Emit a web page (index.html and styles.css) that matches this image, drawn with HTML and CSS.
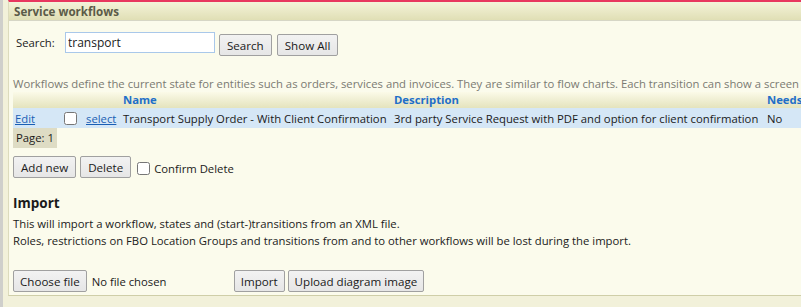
FILE: index.html
```html
<!DOCTYPE html>
<html lang="en">
<head>
    <meta charset="UTF-8">
    <title>Service workflows</title>
    <link rel="stylesheet" href="styles.css">
</head>
<body>
    <div class="page">
        <div class="panel">
            <div class="panel-header">Service workflows</div>
            <div class="panel-body">
                <div class="search-row">
                    <label for="search">Search:</label>
                    <input type="text" id="search" class="search-input" value="transport">
                    <button class="btn">Search</button>
                    <button class="btn">Show All</button>
                </div>

                <p class="intro">Workflows define the current state for entities such as orders, services and invoices. They are similar to flow charts. Each transition can show a screen to the user and run actions.</p>

                <table class="grid">
                    <thead>
                        <tr>
                            <th class="col-edit"></th>
                            <th class="col-check"></th>
                            <th class="col-select"></th>
                            <th class="col-name">Name</th>
                            <th class="col-desc">Description</th>
                            <th class="col-needs">Needs confirmation</th>
                        </tr>
                    </thead>
                    <tbody>
                        <tr class="selected">
                            <td><a href="#">Edit</a></td>
                            <td><input type="checkbox" class="check"></td>
                            <td><a href="#">select</a></td>
                            <td>Transport Supply Order - With Client Confirmation</td>
                            <td>3rd party Service Request with PDF and option for client confirmation</td>
                            <td>No</td>
                        </tr>
                    </tbody>
                </table>
                <div class="pager">Page: 1</div>

                <div class="actions">
                    <button class="btn">Add new</button>
                    <button class="btn">Delete</button>
                    <label class="confirm"><input type="checkbox" class="check">Confirm Delete</label>
                </div>

                <h2>Import</h2>
                <p class="import-text">This will import a workflow, states and (start-)transitions from an XML file.<br>
                Roles, restrictions on FBO Location Groups and transitions from and to other workflows will be lost during the import.</p>

                <div class="upload-row">
                    <button class="btn">Choose file</button>
                    <span class="file-name">No file chosen</span>
                    <button class="btn">Import</button>
                    <button class="btn">Upload diagram image</button>
                </div>
            </div>
        </div>
    </div>
</body>
</html>
```

FILE: styles.css
```css
:root {
    --page-bg: #f2f1da;
    --panel-bg: #fbfbec;
    --panel-border: #dcdbbd;
    --accent: #e8375f;
    --link: #1a5fb4;
    --head-text: #1f6fc8;
    --row-selected: #d5e7f6;
    --muted: #7a7a72;
}

* {
    margin: 0;
    padding: 0;
    box-sizing: border-box;
}

body {
    font-family: 'Open Sans', 'Noto Sans', sans-serif;
    font-size: 11.3px;
    color: #1a1a1a;
    background: var(--page-bg);
    overflow: hidden;
}

.page {
    border-left: 3px solid #cfcfcb;
    padding-left: 5px;
    height: 307px;
    background: var(--page-bg);
}

.panel {
    border-top: 2px solid var(--accent);
    border-left: 1px solid var(--panel-border);
    border-bottom: 1px solid #cfcea8;
    background: var(--panel-bg);
    width: 820px;
}

.panel-header {
    height: 19px;
    padding-left: 5px;
    line-height: 19px;
    font-size: 11.6px;
    font-weight: 700;
    color: #5b5b48;
    background: linear-gradient(#f4f3d9, #e0dfb5);
    border-bottom: 1px solid #d6d6c6;
}

.panel-body {
    padding: 11px 0 3px 4px;
}

.search-row {
    display: flex;
    align-items: flex-start;
    height: 24px;
    padding-left: 3px;
}

.search-row label {
    width: 49px;
    line-height: 21px;
}

.search-input {
    width: 150px;
    height: 21px;
    margin-right: 4px;
    padding: 0 2px;
    border: 1px solid #a9c8ea;
    background: #fff;
    font: inherit;
    font-size: 12px;
    color: #1a1a1a;
}

.search-row .btn {
    margin-top: 2px;
}

.search-row .btn + .btn {
    margin-left: 5px;
}

.btn {
    height: 22px;
    padding: 0 7px;
    font: inherit;
    font-size: 11.6px;
    color: #1a1a1a;
    background: linear-gradient(#f2f2f2, #e6e6e6);
    border: 1px solid #a0a0a0;
    border-radius: 2px;
}

.intro {
    margin-top: 20px;
    white-space: nowrap;
    color: var(--muted);
    line-height: 16px;
}

.grid {
    border-collapse: collapse;
    white-space: nowrap;
    table-layout: fixed;
    width: 830px;
}

.grid th {
    height: 16px;
    text-align: left;
    font-weight: 700;
    color: var(--head-text);
    background: linear-gradient(#fbfae8, #e4e3bd);
    padding: 0 0 0 2px;
    line-height: 16px;
    overflow: hidden;
}

.grid td {
    height: 20px;
    padding: 0 2px;
    overflow: hidden;
}

.col-edit { width: 49px; }
.col-check { width: 22px; }
.col-select { width: 37px; }
.col-name { width: 271px; }
.col-desc { width: 373px; }

.selected td {
    background: var(--row-selected);
}

a {
    color: var(--link);
}

.check {
    width: 13px;
    height: 13px;
    vertical-align: -2px;
}

.pager {
    display: inline-block;
    padding: 0 3px;
    height: 20px;
    line-height: 20px;
    background: #dedcc4;
}

.actions {
    display: flex;
    align-items: center;
    gap: 4px;
    margin-top: 8px;
}

.confirm {
    display: flex;
    align-items: center;
    gap: 4px;
    margin-left: 2px;
    margin-top: 2px;
}

.confirm .check {
    vertical-align: 0;
}

h2 {
    font-size: 13.5px;
    font-weight: 700;
    margin-top: 15px;
    line-height: 20px;
}

.import-text {
    margin-top: 2px;
    line-height: 17px;
}

.upload-row {
    display: flex;
    align-items: center;
    margin-top: 21px;
}

.file-name {
    width: 147px;
    padding-left: 5px;
}

.upload-row .btn {
    padding: 0 6px;
}

.upload-row .btn + .btn {
    margin-left: 3px;
}
```
